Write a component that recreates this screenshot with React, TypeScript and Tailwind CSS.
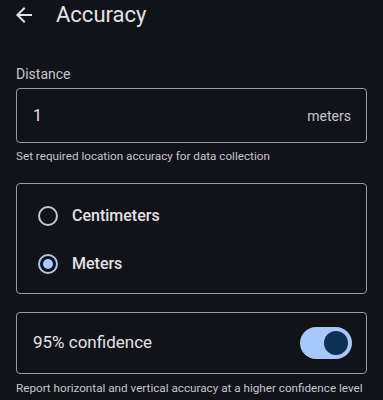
import { useState } from 'react';

function BackArrow() {
  return (
    <svg width="24" height="24" viewBox="0 0 24 24" fill="#e2e2e9">
      <path d="M20 11H7.83l5.59-5.59L12 4l-8 8 8 8 1.41-1.41L7.83 13H20v-2z" />
    </svg>
  );
}

function Radio({ checked }: { checked: boolean }) {
  return (
    <span
      className={`flex h-5 w-5 items-center justify-center rounded-full border-2 ${
        checked ? 'border-[#a8c7fa]' : 'border-[#c4c6d0]'
      }`}
    >
      {checked && <span className="h-[10px] w-[10px] rounded-full bg-[#a8c7fa]" />}
    </span>
  );
}

export default function App() {
  const [unit, setUnit] = useState<'cm' | 'm'>('m');
  const [on, setOn] = useState(true);

  return (
    <div
      className="h-[400px] w-[383px] overflow-hidden bg-[#111318] text-[#e2e2e9]"
      style={{ fontFamily: 'Roboto, "Noto Sans", sans-serif' }}
    >
      <div className="flex h-[30px] items-center pl-3">
        <BackArrow />
        <h1 className="ml-5 text-[22px] leading-7">Accuracy</h1>
      </div>

      <div className="px-4">
        <p className="mt-[34px] text-sm leading-5 text-[#c4c6d0]">Distance</p>
        <div className="mt-1 flex h-[55px] items-center justify-between rounded border border-[#9a9ca4] pl-4 pr-[15px]">
          <span className="text-base">1</span>
          <span className="text-sm text-[#c4c6d0]">meters</span>
        </div>
        <p className="mt-[5px] whitespace-nowrap text-[11.7px] leading-4 text-[#c4c6d0]">
          Set required location accuracy for data collection
        </p>

        <div className="mt-[19px] h-[111px] rounded border border-[#9a9ca4] pt-2 pb-[6px]">
          {([
            ['cm', 'Centimeters'],
            ['m', 'Meters'],
          ] as const).map(([key, label]) => (
            <button
              key={key}
              onClick={() => setUnit(key)}
              className="flex h-12 w-full items-center gap-[14px] pl-[21px] text-left"
            >
              <Radio checked={unit === key} />
              <span className="text-base font-medium">{label}</span>
            </button>
          ))}
        </div>

        <div className="mt-[18px] flex h-[62px] items-center justify-between rounded border border-[#9a9ca4] pl-4 pr-[14px]">
          <span className="text-[17px]">95% confidence</span>
          <button
            onClick={() => setOn(!on)}
            className={`flex h-8 w-[52px] items-center rounded-full px-1 ${
              on ? 'justify-end bg-[#a8c7fa]' : 'justify-start bg-[#44474e]'
            }`}
          >
            <span className={`h-6 w-6 rounded-full ${on ? 'bg-[#0e3257]' : 'bg-[#8e9099]'}`} />
          </button>
        </div>
        <p className="mt-[6px] whitespace-nowrap text-[11.7px] leading-4 text-[#c4c6d0]">
          Report horizontal and vertical accuracy at a higher confidence level
        </p>
      </div>
    </div>
  );
}
